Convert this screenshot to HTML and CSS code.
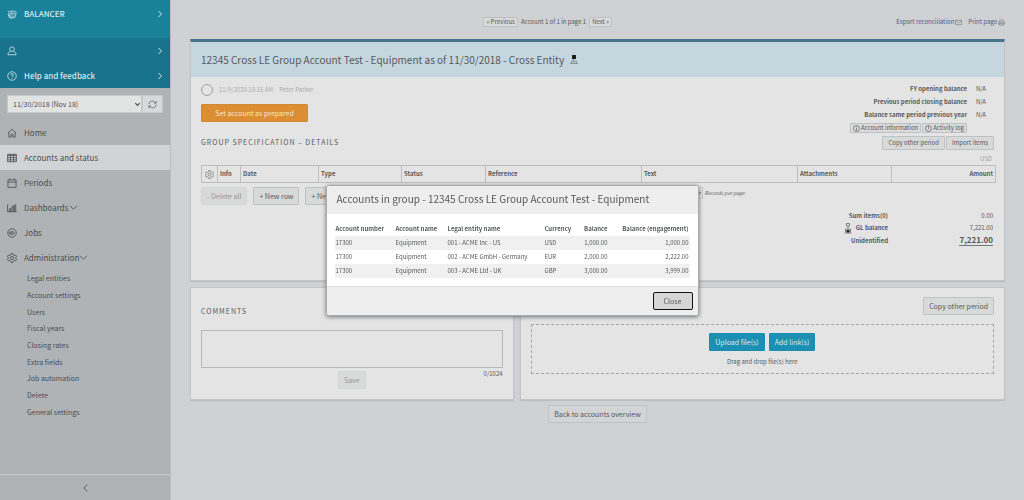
FILE: index.html
```html
<!DOCTYPE html>
<html lang="en">
<head>
<meta charset="utf-8">
<title>Balancer - Account reconciliation</title>
<link rel="stylesheet" href="styles.css">
</head>
<body>
<div class="app">
  <aside class="sidebar">
    <a class="brand" href="#">
      <svg class="icon" viewBox="0 0 16 16"><path d="M4 3.500h8.500a2 2 0 0 1 2 2v2M3 5v6.500a3 3 0 0 0 3 3h3a5 5 0 0 0 5-5V8L6 5.500M3 4.500L1.500 3M6.500 7.500a3 3 0 1 0 4 3.500L5 7M1.500 9l3 3"/></svg>
      <span>BALANCER</span>
      <svg class="chev" viewBox="0 0 8 8"><path d="M2.500 1l3 3-3 3"/></svg>
    </a>
    <div class="account">
      <a class="account-link" href="#" aria-label="Profile">
        <svg class="icon" viewBox="0 0 16 16"><circle cx="8" cy="5" r="3.700"/><path d="M5.500 8.500C2.500 9.500 1.500 11 1.500 14h13c0-3-1-4.500-4-5.500"/></svg>
        <span></span>
        <svg class="chev" viewBox="0 0 8 8"><path d="M2.500 1l3 3-3 3"/></svg>
      </a>
      <a class="account-link" href="#">
        <svg class="icon" viewBox="0 0 16 16"><circle cx="8" cy="8" r="6.800"/><path d="M5.800 6.300c0-3 4.500-2.800 4.500 0C10.300 8 8 8 8 9.800M8 11v1.500"/></svg>
        <span>Help and feedback</span>
        <svg class="chev" viewBox="0 0 8 8"><path d="M2.500 1l3 3-3 3"/></svg>
      </a>
    </div>
    <div class="period">
      <div class="select-wrap">
        <select aria-label="Period"><option>11/30/2018 (Nov 18)</option></select>
        <svg class="arrow" viewBox="0 0 8 8"><path d="M1.500 2.500L4 5l2.500-2.500"/></svg>
      </div>
      <button class="refresh" type="button" aria-label="Refresh">
        <svg viewBox="0 0 16 16"><path d="M1.500 7.500C2 1.500 10 0 13 5M14.500 1.500V5.500h-4M14.500 8.500C14 14.500 6 16 3 11M1.500 14.500v-4h4"/></svg>
      </button>
    </div>
    <nav class="nav">
      <a class="nav-item" href="#">
        <svg class="icon" viewBox="0 0 16 16"><path d="M1.500 8L8 2l6.500 6M3 7v7.500h3.500V10h3v4.500H13V7"/></svg>Home</a>
      <a class="nav-item active" href="#">
        <svg class="icon" viewBox="0 0 16 16"><path d="M1 2h14v12H1zM1 4h14M1 7.500h14M1 11h14M5.500 2v12M10.500 2v12"/></svg>Accounts and status</a>
      <a class="nav-item" href="#">
        <svg class="icon" viewBox="0 0 16 16"><path d="M1.500 3h13v12h-13zM1.500 6.500h13M4.500 3V.5M11.500 3V.5"/></svg>Periods</a>
      <a class="nav-item" href="#">
        <svg class="icon" viewBox="0 0 16 16"><path d="M1 2v12h14M4 14V9h2v5M8 14V5h2v9M12 14V3h2v11"/></svg>Dashboards<svg class="more" viewBox="0 0 10 8"><path d="M1 2l4 4 4-4"/></svg></a>
      <a class="nav-item" href="#">
        <svg class="icon" viewBox="0 0 16 16"><circle cx="8" cy="8" r="6.800"/><path d="M6 5v6M8 5l4 3-4 3zM4 6v4"/></svg>Jobs</a>
      <a class="nav-item" href="#">
        <svg class="icon" viewBox="0 0 16 16"><path d="M6.500 1h3l.5 2.200 1.500.9 2.200-.8 1.500 2.600L13.500 8l1.700 2.100-1.500 2.600-2.200-.8-1.500.9-.5 2.200h-3L6 12.800l-1.500-.9-2.200.8-1.500-2.600L2.500 8 .8 5.900l1.500-2.600 2.200.8L6 3.200z"/><circle cx="8" cy="8" r="2.500"/></svg>Administration<svg class="more" viewBox="0 0 10 8"><path d="M1 2l4 4 4-4"/></svg></a>
      <div class="subnav">
        <a href="#">Legal entities</a>
        <a href="#">Account settings</a>
        <a href="#">Users</a>
        <a href="#">Fiscal years</a>
        <a href="#">Closing rates</a>
        <a href="#">Extra fields</a>
        <a href="#">Job automation</a>
        <a href="#">Delete</a>
        <a href="#">General settings</a>
      </div>
    </nav>
    <button class="collapse" type="button" aria-label="Collapse menu">
      <svg viewBox="0 0 8 10"><path d="M6 1L2 5l4 4"/></svg>
    </button>
  </aside>

  <main class="main">
    <div class="topbar">
      <div class="pager">
        <button class="mini" type="button">« Previous</button>
        <span>Account 1 of 1 in page 1</span>
        <button class="mini" type="button">Next »</button>
      </div>
      <div class="links">
        <a href="#">Export reconciliation<svg viewBox="0 0 16 14"><path d="M1 2h14v10H1zM1 2l7 6 7-6"/></svg></a>
        <a href="#">Print page<svg viewBox="0 0 16 14"><path d="M4 6V1h7l1.500 2v3M4 11H1V6h14v5h-3M4 9h8v4H4z"/></svg></a>
      </div>
    </div>

    <section class="panel details">
      <h1 class="panel-title">12345 Cross LE Group Account Test - Equipment as of 11/30/2018 - Cross Entity
        <svg class="org" viewBox="0 0 8 9"><path class="dark" d="M2 0h4v4H2z"/><path class="grey" d="M3.500 4v1.500M1.500 8V6h5v2M4 6v2M0 8.500h8"/></svg>
      </h1>
      <div class="details-body">
        <div class="overview">
          <div class="status">
            <div class="stamp"><span class="ring"></span><span>11/9/2020 10:15 AM</span><span>Peter Parker</span></div>
            <button class="btn orange" type="button">Set account as prepared</button>
          </div>
          <div class="balances">
            <dl>
              <dt>FY opening balance</dt><dd>N/A</dd>
              <dt>Previous period closing balance</dt><dd>N/A</dd>
              <dt>Balance same period previous year</dt><dd>N/A</dd>
            </dl>
            <div class="info-buttons">
              <button class="mini flat" type="button"><svg viewBox="0 0 10 10"><circle cx="5" cy="5" r="4.200"/><path d="M5 2.200v1M5 4.200v3.600"/></svg>Account information</button>
              <button class="mini flat" type="button"><svg viewBox="0 0 10 10"><circle cx="5" cy="5" r="4.200"/><path d="M5 1.800V5.500"/></svg>Activity log</button>
            </div>
          </div>
        </div>
        <div class="spec-head">
          <h2>GROUP SPECIFICATION – DETAILS</h2>
          <div class="spec-buttons">
            <button class="btn small" type="button">Copy other period</button>
            <button class="btn small" type="button">Import items</button>
          </div>
        </div>
        <div class="currency">USD</div>
        <table class="spec">
          <colgroup><col class="c-gear"><col class="c-info"><col class="c-date"><col class="c-type"><col class="c-status"><col class="c-wide"><col class="c-wide"><col class="c-att"><col class="c-amount"></colgroup>
          <thead><tr>
            <th class="gear" aria-label="Settings"><svg viewBox="0 0 16 16"><path d="M6.500 1h3l.5 2.200 1.500.9 2.200-.8 1.500 2.600L13.500 8l1.700 2.100-1.500 2.600-2.200-.8-1.500.9-.5 2.200h-3L6 12.800l-1.500-.9-2.200.8-1.500-2.600L2.500 8 .8 5.900l1.500-2.600 2.200.8L6 3.200z"/><circle cx="8" cy="8" r="2.500"/></svg></th>
            <th>Info</th><th>Date</th><th>Type</th><th>Status</th><th>Reference</th><th>Text</th><th>Attachments</th><th class="num">Amount</th>
          </tr></thead>
        </table>
        <div class="toolbar">
          <button class="btn" type="button" disabled>- Delete all</button>
          <button class="btn" type="button">+ New row</button>
          <button class="btn" type="button">+ New</button>
          <label class="records">
            <span class="select-wrap"><select><option>10</option></select><svg class="arrow" viewBox="0 0 8 8"><path d="M1.500 2.500L4 5l2.500-2.500"/></svg></span>
            Records per page
          </label>
        </div>
        <dl class="totals">
          <dt>Sum items(0)</dt><dd>0.00</dd>
          <dt><svg viewBox="0 0 8 11"><path d="M2.500 .5h3v2.500h-3zM4 3v2.500M1.500 9V6h5v3M.5 10h7"/><path class="dark" d="M2.500 7h3v2.500h-3z"/></svg><a href="#">GL balance</a></dt><dd>7,221.00</dd>
          <dt>Unidentified</dt><dd><strong>7,221.00</strong></dd>
        </dl>
      </div>
    </section>

    <div class="lower">
      <section class="panel comments">
        <h2><label for="comment">COMMENTS</label></h2>
        <textarea id="comment"></textarea>
        <div class="comment-foot">
          <button class="btn" type="button" disabled>Save</button>
          <span class="count">0/1024</span>
        </div>
      </section>
      <section class="panel files">
        <button class="btn copy" type="button">Copy other period</button>
        <div class="dropzone">
          <div class="drop-buttons">
            <button class="btn teal" type="button">Upload file(s)</button>
            <button class="btn teal" type="button">Add link(s)</button>
          </div>
          <p>Drag and drop file(s) here</p>
        </div>
      </section>
    </div>
    <button class="btn back" type="button">Back to accounts overview</button>
  </main>
</div>

<div class="overlay">
  <div class="modal" role="dialog" aria-labelledby="modal-title">
    <h2 class="modal-title" id="modal-title">Accounts in group - 12345 Cross LE Group Account Test - Equipment</h2>
    <div class="modal-body">
      <table class="group">
        <colgroup><col class="g-num"><col class="g-name"><col class="g-entity"><col class="g-cur"><col class="g-bal"><col class="g-eng"></colgroup>
        <thead><tr><th>Account number</th><th>Account name</th><th>Legal entity name</th><th>Currency</th><th class="num">Balance</th><th class="num">Balance (engagement)</th></tr></thead>
        <tbody>
          <tr><td>17300</td><td>Equipment</td><td>001 - ACME Inc - US</td><td>USD</td><td class="num">1,000.00</td><td class="num">1,000.00</td></tr>
          <tr><td>17300</td><td>Equipment</td><td>002 - ACME GmbH - Germany</td><td>EUR</td><td class="num">2,000.00</td><td class="num">2,222.00</td></tr>
          <tr><td>17300</td><td>Equipment</td><td>003 - ACME Ltd - UK</td><td>GBP</td><td class="num">3,000.00</td><td class="num">3,999.00</td></tr>
        </tbody>
      </table>
    </div>
    <div class="modal-foot"><button class="btn close" type="button">Close</button></div>
  </div>
</div>
</body>
</html>
```
FILE: styles.css
```css
* { box-sizing: border-box; }

body {
  margin: 0;
  background: #d0d1d3;
  color: #56595b;
  font: 6px/12px "Noto Sans CJK SC", "Noto Sans", sans-serif;
}

button, select, textarea { font: inherit; color: inherit; margin: 0; }
a { color: inherit; text-decoration: none; }
h1, h2, dl, dd, p { margin: 0; font-weight: normal; }
svg { fill: none; stroke: currentColor; flex: none; }
table { border-collapse: collapse; table-layout: fixed; width: 100%; }
th, td { text-align: left; }
.num { text-align: right; }
.dark { fill: #1b1d1f; stroke: none; }
.grey { stroke: #8b9499; }

.app { display: flex; min-height: 100vh; }

/* Sidebar */
.sidebar {
  display: flex;
  flex-direction: column;
  flex: none;
  width: 171px;
  background: #afb3b6;
  border-right: 1px solid #bbbec1;
  color: #4a4e51;
  font-size: 8px;
}
.icon { width: 10px; height: 10px; stroke-width: 1.3; margin-right: 7px; }
.chev { width: 8px; height: 8px; margin-left: auto; }
.brand, .account-link, .nav-item { display: flex; align-items: center; padding-left: 7px; }
.brand, .account-link { padding-right: 6px; color: #d5e6eb; }
.brand { height: 38px; padding-bottom: 11px; background: #1a819b; font-weight: 500; }
.account { background: #19738d; }
.account-link { height: 25px; font-weight: 500; }
.period { display: flex; padding: 7px; font-size: 7px; }
.select-wrap { position: relative; display: flex; flex: 1; }
.select-wrap select {
  appearance: none;
  width: 100%;
  padding: 0 5px;
  border: 1px solid #c6c8ca;
  border-radius: 0;
  background: #e2e3e3;
}
.arrow { position: absolute; right: 1px; top: 50%; width: 7px; height: 7px; margin-top: -3px; stroke-width: 1.3; }
.period select { height: 18px; }
.refresh { display: grid; place-items: center; width: 21px; padding: 0; border: 1px solid #c6c8ca; background: #d8d9da; }
.refresh svg { width: 9px; height: 9px; stroke-width: 1.2; }
.nav { flex: 1; }
.nav-item { height: 25px; }
.nav-item.active { background: #d2d3d5; }
.more { width: 9px; height: 7px; }
.subnav { display: grid; height: 150px; padding-left: 27px; font-size: 7px; align-items: center; }
.collapse { display: grid; place-items: center; height: 26px; border: 0; border-top: 1px solid #c8cacc; background: none; }
.collapse svg { width: 7px; height: 10px; }

/* Main column */
.main { flex: 1; display: flex; flex-direction: column; padding: 0 19px 20px; min-width: 0; }
.topbar { display: flex; align-items: center; height: 39px; padding-top: 5px; }
.pager { display: flex; align-items: center; gap: 3px; margin-left: 36%; }
.links { display: flex; gap: 6px; margin-left: auto; color: #4b5a8c; }
.links a { display: flex; align-items: center; gap: 1px; }
.links svg { width: 7px; height: 7px; stroke: #56595b; }

.mini { height: 10px; padding: 0 2px; border: 1px solid #bfc0c1; border-radius: 1px; background: #d9dadb; line-height: 8px; }
.mini.flat { display: flex; align-items: center; gap: 1px; }
.mini svg { width: 7px; height: 7px; }

.btn {
  height: 18px;
  padding: 0 5px;
  border: 1px solid #c0c1c2;
  border-radius: 1px;
  background: #d8d9d9;
  font-size: 7px;
  line-height: 14px;
}
.btn.small { height: 14px; font-size: 6px; line-height: 12px; }
.btn:disabled { color: #96989a; border-color: #d4d5d5; }
.btn.orange { width: 107px; border-color: #cf8a36; background: #dd8e32; color: #f3e6d6; }
.btn.teal { border-color: #1a8eb0; background: #1b90b2; color: #dcebf0; }

.panel { border: 1px solid #c2c4c6; background: #e4e4e4; box-shadow: 0 1px 1px #b9bbbd; border-radius: 1px; }
.panel h2 { font-size: 7px; letter-spacing: 1px; }
.details { border-top: 3px solid #45748a; }
.panel-title { display: flex; align-items: center; gap: 6px; height: 35px; padding: 0 10px; background: #c6d6df; font-size: 10px; line-height: 16px; }
.org { width: 8px; height: 9px; }
.details-body { padding: 5px 10px 33px; }
.overview { display: flex; justify-content: space-between; }
.status { padding-top: 2px; }
.stamp { display: flex; align-items: center; gap: 6px; height: 12px; margin-bottom: 8px; color: #a8aaab; }
.ring { width: 12px; height: 12px; border: 1px solid #9ea1a3; border-radius: 50%; }
.balances dl { display: grid; grid-template-columns: auto 27px; line-height: 13px; text-align: right; }
.balances dt, .totals dt { font-weight: bold; }
.balances dd { padding-right: 8px; }
.info-buttons { display: flex; justify-content: flex-end; gap: 1px; padding: 2px 27px 0 0; }
.spec-head { display: flex; justify-content: space-between; padding-top: 3px; }
.spec-buttons { display: flex; gap: 1px; }
.currency { padding: 3px 2px 0; color: #a0a2a4; text-align: right; }
.spec { border: 1px solid #bcbebf; }
.spec th { height: 17px; padding: 0 2px; border-left: 1px solid #bcbebf; }
.gear svg { display: block; width: 9px; height: 9px; margin: 0 auto; }
.c-gear { width: 16px; } .c-info { width: 23px; } .c-date { width: 78px; } .c-type { width: 83px; }
.c-status { width: 84px; } .c-wide { width: 156px; } .c-att { width: 94px; } .c-amount { width: 104px; }
.toolbar { display: flex; align-items: flex-start; gap: 6px; padding-top: 4px; }
.records { display: flex; align-items: center; gap: 2px; margin-left: 335px; font-size: 5px; font-style: italic; }
.records .select-wrap { width: 24px; }
.records select { height: 12px; }
.totals { display: grid; grid-template-columns: 1fr 106px; padding-top: 5px; text-align: right; }
.totals dt { display: flex; justify-content: flex-end; align-items: center; gap: 4px; }
.totals dd { padding-right: 1px; }
.totals svg { width: 8px; height: 11px; stroke: #7e8284; }
.totals a { color: #44568c; }
.totals strong { border-bottom: 1px solid #76797b; font-size: 8px; }

.lower { display: grid; grid-template-columns: 2fr 3fr; gap: 6px; margin: 6px 0 5px; }
.comments { padding: 17px 10px 10px; }
.comments textarea { display: block; width: 100%; height: 38px; margin-top: 13px; border: 1px solid #b6b8ba; background: #e4e4e4; resize: none; }
.comment-foot { display: grid; grid-template-columns: 1fr auto 1fr; padding-top: 3px; }
.comment-foot .btn { grid-column: 2; }
.count { text-align: right; line-height: 6px; }
.files { display: flex; flex-direction: column; padding: 9px 10px 10px; }
.copy { align-self: flex-end; }
.dropzone { margin-top: 9px; padding: 8px 0 5px; border: 1px dashed #a3a5a7; text-align: center; }
.drop-buttons { display: flex; justify-content: center; gap: 4px; margin-bottom: 5px; }
.back { align-self: center; background: #d3d4d5; }

/* Dialog */
.overlay { position: fixed; inset: 0; display: grid; place-items: center; }
.modal { width: 373px; border-radius: 3px; background: #fff; border: 1px solid #a9abac; box-shadow: 0 1px 4px #6f7274; overflow: hidden; }
.modal-title { padding: 4px 10px 7px; background: #eee; font-size: 10px; line-height: 17px; }
.modal-body { padding: 8px; }
.group th { height: 14px; padding: 0 1px; }
.group td { height: 14px; padding: 0 1px; }
.group tbody tr:nth-child(odd) { background: #f0f0f0; }
.g-num { width: 60px; } .g-name { width: 52px; } .g-entity { width: 97px; }
.g-cur { width: 30px; } .g-bal { width: 35px; }
.modal-foot { display: flex; justify-content: flex-end; padding: 5px; background: #eee; border-top: 1px solid #dcdcdc; }
.close { width: 40px; border: 1px solid #111; border-radius: 2px; background: #d6d6d6; }
```
